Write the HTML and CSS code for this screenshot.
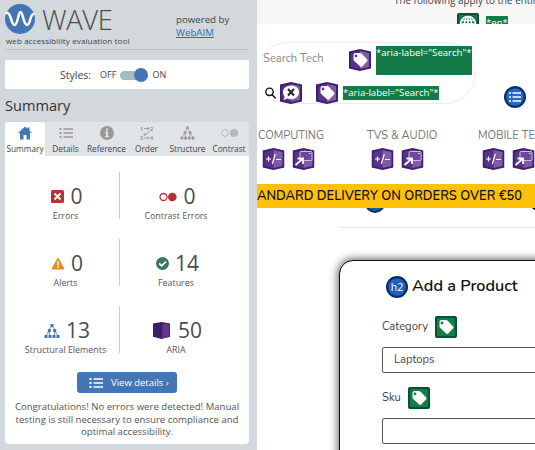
FILE: index.html
```html
<!DOCTYPE html>
<html lang="en">
<head>
<meta charset="utf-8">
<title>WAVE</title>
<link rel="stylesheet" href="styles.css">
</head>
<body>
<svg class="defs" width="0" height="0" aria-hidden="true">
  <symbol id="cube" viewBox="0 0 22 22"><path fill="#3f2069" d="M0 2.500 11 0l11 2.500v17L11 22 0 19.500z"/><path fill="#5a318c" d="m2 4 9-2v18l-9-2z"/><path fill="#7d5ba5" d="m11 2 9 2v14l-9 2z"/></symbol>
  <symbol id="tag" viewBox="0 0 22 22"><path fill="#fff" fill-rule="evenodd" d="M4.500 6q0-2 2-2H11q1 0 1.700.700l5.500 5.800q.800.900 0 1.800l-5 5.200q-1 .900-2 0L5.200 12q-.700-.700-.700-1.500zM7 5.500A1.400 1.400 0 1 0 7 8.300 1.400 1.400 0 1 0 7 5.500z"/></symbol>
  <symbol id="list" viewBox="0 0 14 12"><path fill="none" stroke="currentColor" stroke-width="1.300" d="M4.500 2H14M4.500 6H14M4.500 10H14"/><path fill="none" stroke="currentColor" stroke-width="2" d="M.500 2h2M.500 6h2M.500 10h2"/></symbol>
  <symbol id="tree" viewBox="0 0 16 14"><path fill="currentColor" d="M6.500 0h3v3h-3zM3.800 5h3v3h-3zM9.200 5h3v3h-3zM.500 11h3v3h-3zM4.500 11h3v3h-3zM8.500 11h3v3h-3zM12.500 11h3v3h-3z"/><path fill="none" stroke="currentColor" stroke-width=".8" d="m7 3-2 3M9 3l2 3M5 7l-3 5M5 7l1 5M11 7l-1 5M11 7l3 5"/></symbol>
  <symbol id="menu" viewBox="0 0 22 22"><use href="#cube"/><path stroke="#fff" stroke-width="1.200" fill="none" d="M3.500 11h5M6 8.500v5M12.800 6l-3 10M13.500 11.500h5"/></symbol>
  <symbol id="popup" viewBox="0 0 22 22"><use href="#cube"/><rect x="7.500" y="3.500" width="12" height="9" rx="1" fill="#6d489a" stroke="#cdbbe0"/><path d="M16.500 5.500h1.500" stroke="#fff"/><path stroke="#fff" stroke-width="1.800" fill="none" d="m3 17 7-6M5 10.500h5.500V16"/></symbol>
</svg>
<div class="app">
<aside class="side">
  <header class="brand">
    <div>
      <div class="logo"><svg width="30" height="30" viewBox="0 0 30 30"><circle cx="15" cy="15" r="15" fill="#4475b5"/><path fill="none" stroke="#fff" stroke-width="2.500" stroke-linecap="round" d="M1 9c5-2 5 12 8.500 12S13 8 15.500 8s3 13 6.500 13S25 10 28.500 10"/></svg><span>WAVE</span></div>
      <div class="tagline">web accessibility evaluation tool</div>
    </div>
    <div class="powered">powered by<br><a>WebAIM</a></div>
  </header>
  <div class="styles"><span class="styles-label">Styles:</span><span>OFF</span><i class="switch"></i><span>ON</span></div>
  <h1>Summary</h1>
  <nav class="tabs">
    <div class="tab active"><svg width="14" height="13" viewBox="0 0 14 13"><path fill="#4475b5" d="M7 0 0 6.500h2V13h3.500V8.500h3V13H12V6.500h2l-2.500-2.300V1h-2v1.300z"/></svg><span>Summary</span></div>
    <div class="tab t-details"><svg width="14" height="13"><use href="#list"/></svg><span>Details</span></div>
    <div class="tab t-reference"><svg width="14" height="14" viewBox="0 0 14 14"><circle cx="7" cy="7" r="7" fill="#999"/><path fill="#e0e4e7" d="M6 2.500h2v2H6zM5 5.500h3v4.500h1v1.300H5V10h1V6.800H5z"/></svg><span>Reference</span></div>
    <div class="tab t-order"><svg width="14" height="14" viewBox="0 0 14 14"><g class="digits"><text x="0" y="4.500">1</text><text x="10" y="4.500">2</text><text x="0" y="13.500">3</text><text x="10" y="13.500">4</text></g><path fill="none" stroke="#999" stroke-width=".9" d="M4 2.500h5M7.500 1 9 2.500 7.500 4M10 5.500l-6 3.500M6 9H4V7.200M4 12h5M7.500 10.500 9 12l-1.500 1.500"/></svg><span>Order</span></div>
    <div class="tab t-structure"><svg width="15" height="14"><use href="#tree"/></svg><span>Structure</span></div>
    <div class="tab t-contrast"><svg width="17" height="14" viewBox="0 0 17 14"><circle cx="4" cy="7" r="3.300" fill="none" stroke="#bbb"/><circle cx="13" cy="7" r="4" fill="#b5b7b9"/></svg><span>Contrast</span></div>
  </nav>
  <section class="panel">
    <div class="counts">
      <div class="cell"><div class="num"><svg width="13" height="13" viewBox="0 0 13 13"><rect width="13" height="13" rx="1.500" fill="#b93335"/><path stroke="#fff" stroke-width="1.800" d="m3.500 3.500 6 6m0-6-6 6"/></svg><b>0</b></div><span>Errors</span></div>
      <div class="cell right"><div class="num"><svg width="18" height="10" viewBox="0 0 18 10"><circle cx="4.500" cy="5" r="3.500" fill="none" stroke="#b93335" stroke-width="1.300"/><circle cx="13.300" cy="5" r="4.300" fill="#b92c30"/></svg><b>0</b></div><span>Contrast Errors</span></div>
      <div class="cell"><div class="num"><svg width="14" height="13" viewBox="0 0 14 13"><path fill="#e38f18" stroke="#e38f18" stroke-linejoin="round" d="m7 1 6 11H1z"/><path stroke="#fff" stroke-width="1.500" d="M7 4v4.500M7 9.500V11"/></svg><b>0</b></div><span>Alerts</span></div>
      <div class="cell right"><div class="num"><svg width="13" height="13" viewBox="0 0 13 13"><circle cx="6.500" cy="6.500" r="6.500" fill="#39785e"/><path fill="none" stroke="#fff" stroke-width="1.700" d="m3.200 6.500 2.500 2.300 4.200-4.200"/></svg><b>14</b></div><span>Features</span></div>
      <div class="cell"><div class="num blue"><svg width="16" height="14"><use href="#tree"/></svg><b>13</b></div><span>Structural Elements</span></div>
      <div class="cell right"><div class="num"><svg width="17" height="17" viewBox="0 0 22 22"><path fill="#3d1d65" d="m0 2 11-2 11 2v17l-11 3-11-3z"/><path fill="#61388e" d="m12 3 9-1v16l-9 3z"/></svg><b class="wide">50</b></div><span>ARIA</span></div>
    </div>
    <button class="view"><svg width="14" height="12"><use href="#list"/></svg><span>View details ›</span></button>
    <p class="msg">Congratulations! No errors were detected! Manual<br>testing is still necessary to ensure compliance and<br>optimal accessibility.</p>
  </section>
</aside>
<main class="page">
  <div class="topstrip"><div class="apply">The following apply to the entire</div>
    <div class="lang"><svg width="22" height="22" viewBox="0 0 22 22"><rect width="22" height="22" rx="2" fill="#055331"/><rect x="2" y="2" width="18" height="18" fill="#137c48"/><g fill="none" stroke="#fff" stroke-width="1.500"><circle cx="11" cy="11" r="7.500"/><ellipse cx="11" cy="11" rx="3.500" ry="7.500"/><path d="M11 3v16M4.500 7.500h13M3.500 11h15"/></g></svg><span class="mark">*en*</span></div>
  </div>
  <div class="masthead">
    <div class="search">
      <div class="srow"><span class="placeholder">Search Tech</span><svg width="22" height="22"><use href="#cube"/><use href="#tag"/></svg><span class="mark tall">*aria-label="Search"*</span></div>
      <div class="srow second"><svg class="glass" width="11" height="12" viewBox="0 0 11 12"><circle cx="4.500" cy="4.800" r="3.700" fill="none" stroke="#111" stroke-width="1.400"/><path stroke="#111" stroke-width="1.600" d="m7.200 7.700 3.400 3.600"/></svg><svg width="22" height="22" viewBox="0 0 22 22"><use href="#cube"/><path fill="#fff" d="M11 3.500c5 0 8 3 8 6.800s-3.500 7-8 7c-1.500 0-2.500-.3-3.500-.8L3.500 18l1.200-3.500C3.600 13.300 3 12 3 10.300 3 6.500 6 3.500 11 3.500z"/><path stroke="#222" stroke-width="2" d="m8 7 6 6.500M14 7l-6 6.500"/></svg><svg class="tag2" width="22" height="22"><use href="#cube"/><use href="#tag"/></svg><span class="mark">*aria-label="Search"*</span></div>
    </div>
    <svg class="listbadge" width="22" height="22" viewBox="0 0 22 22"><circle cx="11" cy="11" r="11" fill="#0b2f6b"/><circle cx="11" cy="11" r="8.800" fill="#2468c8"/><path stroke="#fff" stroke-width="1.500" d="M5 7h2m1.500 0H17M5 11h2m1.500 0H17M5 15h2m1.500 0H17"/></svg>
  </div>
  <div class="cats">
    <div class="cat"><span>COMPUTING</span><div><svg width="23" height="22"><use href="#menu"/></svg><svg width="23" height="22"><use href="#popup"/></svg></div></div>
    <div class="cat"><span>TVS &amp; AUDIO</span><div><svg width="23" height="22"><use href="#menu"/></svg><svg width="23" height="22"><use href="#popup"/></svg></div></div>
    <div class="cat"><span>MOBILE TE</span><div><svg width="23" height="22"><use href="#menu"/></svg><svg width="23" height="22"><use href="#popup"/></svg></div></div>
  </div>
  <div class="banner"><span>ANDARD DELIVERY ON ORDERS OVER €50</span></div>
  <div class="under"><i class="circle"></i><i class="circle dark"></i></div>
  <section class="card">
    <h2><svg width="22" height="22" viewBox="0 0 22 22"><circle cx="11" cy="11" r="11" fill="#0a2c66"/><circle cx="11" cy="11" r="8.800" fill="#1e62c2"/><text x="11" y="15" text-anchor="middle">h2</text></svg><span>Add a Product</span></h2>
    <div class="label"><span>Category</span><svg width="22" height="22" viewBox="0 0 22 22"><rect width="22" height="22" rx="2" fill="#055331"/><rect x="2" y="2" width="18" height="18" rx="1" fill="#137c48"/><use href="#tag"/></svg></div>
    <div class="field">Laptops</div>
    <div class="label sku"><span>Sku</span><svg width="22" height="22" viewBox="0 0 22 22"><rect width="22" height="22" rx="2" fill="#055331"/><rect x="2" y="2" width="18" height="18" rx="1" fill="#137c48"/><use href="#tag"/></svg></div>
    <div class="field"></div>
  </section>
</main>
</div>
</body>
</html>
```
FILE: styles.css
```css
* { box-sizing: border-box; }
body { margin: 0; overflow: hidden; font-family: "Open Sans", "Noto Sans", sans-serif; color: #444; }
svg { display: block; flex: none; }
.defs { position: absolute; }
.app { display: flex; width: 535px; height: 450px; overflow: hidden; }
span { white-space: nowrap; }

.side { width: 257px; flex: none; height: 450px; padding: 0 8px 0 5px; background: #d3d8dc; }
.brand { display: flex; height: 50px; width: 244px; border-bottom: 1px solid #bcc2c6; }
.brand > div:first-child { width: 171px; }
.logo { display: flex; height: 35px; padding-top: 4px; }
.logo span { margin-left: 7px; font-size: 27.500px; line-height: 31px; font-weight: 300; color: #4a4d50; letter-spacing: -0.4px; }
.tagline { font-size: 8px; line-height: 12px; padding-left: 1px; letter-spacing: 0.13px; white-space: nowrap; }
.powered { padding-top: 13px; font-size: 9.700px; line-height: 13px; white-space: nowrap; }
.powered a { color: #2f68c0; text-decoration: underline; }
.styles { display: flex; align-items: center; width: 244px; height: 29px; margin-top: 10px; padding-left: 55px; background: #fff; border-radius: 2px; font-size: 9px; }
.styles-label { font-size: 10.500px; margin-right: 9px; }
.switch { width: 24px; height: 9px; margin: 1px 8px 0 4px; background: #a0bdbd; border-radius: 5px; display: flex; align-items: center; justify-content: flex-end; }
.switch::after { content: ""; width: 14px; height: 14px; flex: none; border-radius: 50%; background: #4475b5; margin-right: -4px; }
h1 { margin: 5px 0 0; font-size: 14.600px; line-height: 22px; height: 28px; font-weight: 400; color: #333; }
.tabs { display: flex; width: 244px; height: 34px; background: #e0e4e7; border-radius: 3px 3px 0 0; color: #999; }
.tab { display: flex; flex-direction: column; align-items: center; padding-top: 4px; width: 40px; }
.tab svg { height: 14px; }
.tab span { font-size: 8.300px; line-height: 11px; margin-top: 3px; color: #444; }
.active { background: #fff; border-radius: 3px 3px 0 0; }
.t-details { width: 41px; }
.t-reference { width: 41px; }
.t-order { width: 39px; }
.t-structure { width: 43px; }
.digits { font: bold 5.500px "Open Sans", sans-serif; fill: #999; }
.panel { width: 244px; height: 288px; background: #fff; border-radius: 0 0 4px 4px; padding-top: 16px; }
.counts { display: grid; grid-template-columns: 115px 112px; grid-auto-rows: 47px; row-gap: 20px; }
.cell { display: flex; flex-direction: column; align-items: center; border-right: 1px solid #ccc; padding-left: 7px; }
.cell.right { border: 0; padding-left: 0; }
.num { display: flex; align-items: center; gap: 6px; height: 38px; padding: 11px 0 0 3px; margin-bottom: 1px; }
.num b { font-size: 21px; line-height: 27px; font-weight: 400; color: #4b4b4b; }
.num .wide { margin-left: 2px; }
.blue { color: #4475b5; }
.cell > span { font-size: 8.900px; line-height: 10px; color: #555; }
.view { display: flex; align-items: center; width: 100px; height: 21px; margin: 19px 0 0 72px; padding: 0 0 0 12px; border: 0; border-radius: 3px; background: #4475b5; color: #fff; font: 9.500px "Open Sans", sans-serif; gap: 8px; }
.msg { margin: 8px 0 0; font-size: 9.600px; line-height: 12.600px; text-align: center; white-space: nowrap; color: #555; }

.page { width: 278px; flex: none; overflow: hidden; background: #fff; font-family: "Nunito", "Lato", sans-serif; }
.topstrip { height: 24px; overflow: hidden; background: #f7f7f7; }
.apply { margin: -7px 0 0 137px; height: 20px; font: 9.900px/15px "Open Sans", sans-serif; white-space: nowrap; }
.lang { display: flex; gap: 7px; padding-left: 200px; }
.mark { font: 9.600px/14px "Open Sans", sans-serif; color: #fff; background: #147a47; }
.lang .mark { height: 14px; margin-top: 3px; }
.masthead { display: flex; height: 102px; padding-top: 18px; }
.search { width: 219px; height: 62px; border: 1px solid #ececec; border-left: 0; border-radius: 31px; padding-top: 3px; }
.srow { display: flex; height: 29px; padding-left: 6px; }
.placeholder { width: 86px; font-size: 11.200px; line-height: 25px; color: #888; }
.srow svg { margin-top: 3px; }
.tall { margin-left: 5px; height: 29px; }
.second { padding-left: 8px; height: 30px; padding-top: 4px; }
.second .glass { margin: 8px 4px 0 0; }
.second .tag2 { margin-left: 14px; }
.second .mark { height: 14px; margin: 7px 0 0 5px; }
.listbadge { margin: 44px 0 0 28px; }
.cats { display: flex; height: 58px; }
.cat { width: 109px; flex: none; color: #777; font-size: 11.100px; line-height: 15px; padding: 2px 0 0 1px; }
.cat div { display: flex; gap: 7px; padding: 5px 0 0 4px; }
.cat:nth-child(3) { width: 120px; padding-left: 3px; }
.banner { height: 24px; background: #ffc107; color: #111; font-size: 12.900px; line-height: 24px; font-weight: 600; white-space: nowrap; }
.under { display: flex; gap: 140px; height: 20px; padding-left: 108px; width: 278px; overflow: hidden; border-bottom: 1px solid #e8e8e8; border-image: linear-gradient(to right, transparent 30%, #e8e8e8 30%) 1; }
.circle { width: 20px; height: 20px; flex: none; margin-top: -15px; border-radius: 50%; background: #0864a8; border: 2px solid #0a2c55; }
.dark { background: #111; border-color: #111; margin-left: 4px; margin-top: -17px; }
.card { width: 240px; height: 260px; margin: 32px 0 0 82px; padding: 15px 0 0 42px; border: 1.500px solid #111; border-radius: 14px; box-shadow: 0 0 9px 1px rgba(0,0,0,.65); background: #fff; }
h2 { display: flex; gap: 4px; margin: 0 0 0 4px; height: 22px; line-height: 21px; font-size: 16.200px; font-weight: 600; color: #111; }
h2 text { font: 10.500px "Open Sans", sans-serif; fill: #fff; }
.label { display: flex; gap: 7px; height: 22px; margin-top: 18px; font-size: 11.200px; line-height: 21px; }
.field { width: 230px; height: 26px; margin-top: 9px; padding-left: 11px; border: 1px solid #555; border-radius: 2px; font-size: 11.200px; line-height: 24px; }
.sku { margin-top: 14px; }
```
